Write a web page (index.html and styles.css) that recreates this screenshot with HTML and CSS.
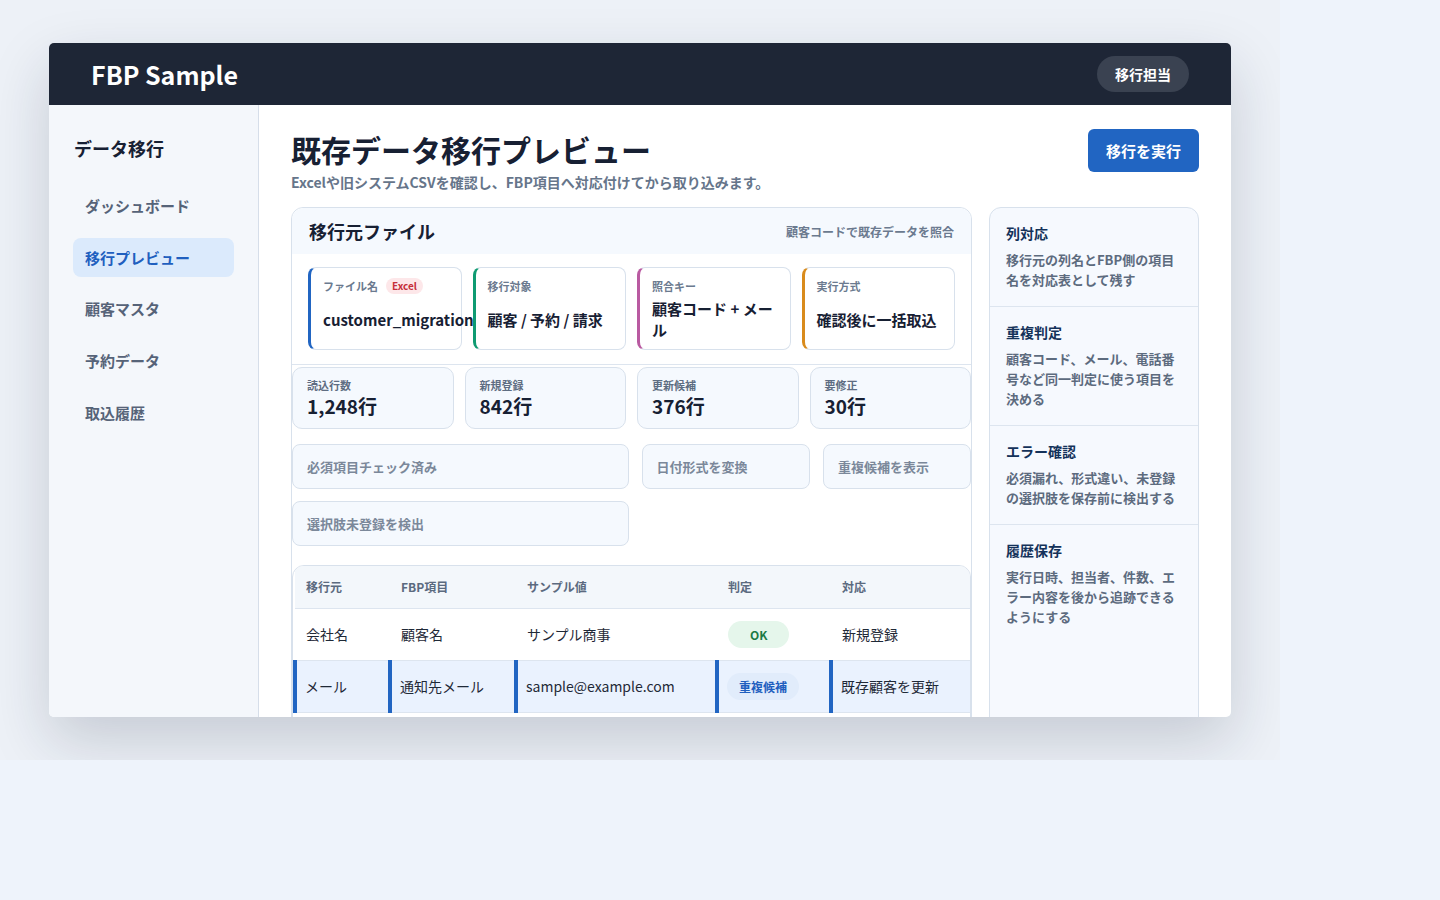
FILE: index.html
```html
<!DOCTYPE html>
<html lang="ja">
<head>
    <meta charset="UTF-8">
    <meta name="viewport" content="width=device-width, initial-scale=1.0">
    <title>FBP Sample - 既存データ移行プレビュー</title>
    <link rel="stylesheet" href="styles.css">
</head>
<body>

<div class="stage">
<div class="app">

    <header class="topbar">
        <div class="brand">FBP Sample</div>
        <div class="role">移行担当</div>
    </header>

    <div class="layout">
        <!-- Sidebar -->
        <nav class="sidebar">
            <h2>データ移行</h2>
            <ul class="nav">
                <li>ダッシュボード</li>
                <li class="active">移行プレビュー</li>
                <li>顧客マスタ</li>
                <li>予約データ</li>
                <li>取込履歴</li>
            </ul>
        </nav>

        <main class="main">
            <div class="page-head">
                <div>
                    <h1>既存データ移行プレビュー</h1>
                    <p class="lead">Excelや旧システムCSVを確認し、FBP項目へ対応付けてから取り込みます。</p>
                </div>
                <button class="run-btn">移行を実行</button>
            </div>

            <div class="content">
                <!-- Source file panel -->
                <section class="panel">
                    <div class="panel-top">
                        <div class="panel-head">
                            <h3>移行元ファイル</h3>
                            <span class="panel-note">顧客コードで既存データを照合</span>
                        </div>
                        <div class="file-cards">
                            <div class="file-card blue">
                                <div class="fc-label">ファイル名 <span class="tag-excel">Excel</span></div>
                                <div class="fc-value">customer_migration_2024.xlsx</div>
                            </div>
                            <div class="file-card green">
                                <div class="fc-label">移行対象</div>
                                <div class="fc-value">顧客 / 予約 / 請求</div>
                            </div>
                            <div class="file-card pink">
                                <div class="fc-label">照合キー</div>
                                <div class="fc-value wrap">顧客コード + メール</div>
                            </div>
                            <div class="file-card orange">
                                <div class="fc-label">実行方式</div>
                                <div class="fc-value">確認後に一括取込</div>
                            </div>
                        </div>
                    </div>

                    <div class="stats">
                        <div class="stat">
                            <div class="stat-label">読込行数</div>
                            <div class="stat-value">1,248行</div>
                        </div>
                        <div class="stat">
                            <div class="stat-label">新規登録</div>
                            <div class="stat-value">842行</div>
                        </div>
                        <div class="stat">
                            <div class="stat-label">更新候補</div>
                            <div class="stat-value">376行</div>
                        </div>
                        <div class="stat">
                            <div class="stat-label">要修正</div>
                            <div class="stat-value">30行</div>
                        </div>
                    </div>

                    <div class="checks">
                        <div class="check">必須項目チェック済み</div>
                        <div class="check">日付形式を変換</div>
                        <div class="check">重複候補を表示</div>
                        <div class="check">選択肢未登録を検出</div>
                    </div>

                    <div class="table-wrap">
                        <table class="map-table">
                            <colgroup>
                                <col style="width: 95px">
                                <col style="width: 126px">
                                <col style="width: 201px">
                                <col style="width: 114px">
                                <col>
                            </colgroup>
                            <thead>
                                <tr>
                                    <th>移行元</th>
                                    <th>FBP項目</th>
                                    <th>サンプル値</th>
                                    <th>判定</th>
                                    <th>対応</th>
                                </tr>
                            </thead>
                            <tbody>
                                <tr>
                                    <td>会社名</td>
                                    <td>顧客名</td>
                                    <td>サンプル商事</td>
                                    <td><span class="badge ok">OK</span></td>
                                    <td>新規登録</td>
                                </tr>
                                <tr class="dup">
                                    <td>メール</td>
                                    <td>通知先メール</td>
                                    <td>sample@example.com</td>
                                    <td><span class="badge warn">重複候補</span></td>
                                    <td>既存顧客を更新</td>
                                </tr>
                                <tr>
                                    <td>電話</td>
                                    <td>電話番号</td>
                                    <td>03-1234-5678</td>
                                    <td><span class="badge ok">OK</span></td>
                                    <td>形式を変換</td>
                                </tr>
                            </tbody>
                        </table>
                    </div>
                </section>

                <!-- Rules -->
                <aside class="rules">
                    <div class="rule">
                        <h4>列対応</h4>
                        <p>移行元の列名とFBP側の項目名を対応表として残す</p>
                    </div>
                    <div class="rule">
                        <h4>重複判定</h4>
                        <p>顧客コード、メール、電話番号など同一判定に使う項目を決める</p>
                    </div>
                    <div class="rule">
                        <h4>エラー確認</h4>
                        <p>必須漏れ、形式違い、未登録の選択肢を保存前に検出する</p>
                    </div>
                    <div class="rule">
                        <h4>履歴保存</h4>
                        <p>実行日時、担当者、件数、エラー内容を後から追跡できるようにする</p>
                    </div>
                </aside>
            </div>
        </main>
    </div>

</div>
</div>

</body>
</html>
```

FILE: styles.css
```css
* {
    box-sizing: border-box;
}
body {
    margin: 0;
    padding: 0;
    background-color: #eef3fb;
    font-family: "Noto Sans CJK JP", "Noto Sans", sans-serif;
    color: #172033;
}
h1, h2, h3, h4, p, ul {
    margin: 0;
    padding: 0;
}
.stage {
    width: 1280px;
    height: 760px;
    overflow: hidden;
    padding: 43px 49px;
    background-color: #edf1f7;
}
.app {
    width: 1182px;
    height: 674px;
    background-color: #fff;
    border-radius: 5px;
    overflow: hidden;
    display: flex;
    flex-direction: column;
    box-shadow: 0 24px 60px rgba(20, 32, 56, 0.18);
}

/* top bar */
.topbar {
    height: 62px;
    flex-shrink: 0;
    background-color: #1e2636;
    display: flex;
    align-items: center;
    justify-content: space-between;
    padding: 0 42px;
}
.brand {
    color: #fff;
    font-size: 25px;
    font-weight: 700;
}
.role {
    height: 36px;
    padding: 0 18px;
    border-radius: 18px;
    background-color: #3a4251;
    color: #fff;
    font-size: 14px;
    font-weight: 700;
    display: flex;
    align-items: center;
}

.layout {
    flex: 1;
    display: flex;
    min-height: 0;
}

/* sidebar */
.sidebar {
    width: 210px;
    flex-shrink: 0;
    background-color: #f4f7fb;
    border-right: 1px solid #d6dee9;
    padding: 30px 24px 0 24px;
}
.sidebar h2 {
    font-size: 18px;
    font-weight: 700;
    line-height: 26px;
    padding-left: 1px;
    color: #172033;
}
.nav {
    list-style: none;
    margin-top: 25px;
    display: flex;
    flex-direction: column;
    gap: 12.7px;
}
.nav li {
    height: 39px;
    line-height: 39px;
    padding-left: 12px;
    border-radius: 8px;
    font-size: 15px;
    font-weight: 700;
    color: #566378;
}
.nav li.active {
    background-color: #dbeafc;
    color: #1f5fbf;
}

/* main */
.main {
    flex: 1;
    min-width: 0;
    padding: 24px 32px 0 32px;
    overflow: hidden;
}
.page-head {
    display: flex;
    justify-content: space-between;
    align-items: flex-start;
}
.page-head h1 {
    font-size: 30px;
    line-height: 40px;
    font-weight: 700;
    color: #172033;
}
.lead {
    margin-top: 3px;
    font-size: 14px;
    line-height: 20px;
    font-weight: 700;
    color: #66758a;
}
.run-btn {
    height: 43px;
    padding: 0 18px;
    border: none;
    border-radius: 6px;
    background-color: #2165c2;
    color: #fff;
    font-family: inherit;
    font-size: 15px;
    font-weight: 700;
    cursor: pointer;
}

.content {
    margin-top: 15px;
    display: flex;
    gap: 17px;
    align-items: flex-start;
}

/* source panel */
.panel {
    width: 681px;
    flex-shrink: 0;
    border: 1px solid #d8e1ec;
    border-radius: 12px;
    background-color: #fff;
    padding-bottom: 20px;
}
.panel-top {
    border-bottom: 1px solid #dde5ef;
    padding-bottom: 14px;
    border-radius: 12px 12px 0 0;
}
.panel-head {
    height: 46px;
    padding: 0 17px;
    background-color: #f5f9fe;
    border-radius: 12px 12px 0 0;
    display: flex;
    align-items: center;
    justify-content: space-between;
}
.panel-head h3 {
    font-size: 18px;
    font-weight: 700;
    color: #172033;
}
.panel-note {
    font-size: 12px;
    font-weight: 700;
    color: #6b7a8f;
}
.file-cards {
    display: grid;
    grid-template-columns: repeat(4, 1fr);
    gap: 11px;
    padding: 13px 16px 0 16px;
}
.file-card {
    background-color: #fff;
    border: 1px solid #d8e1ec;
    border-left: 3px solid #2165c2;
    border-radius: 8px;
    padding: 10px 12px 9px 12px;
    display: flex;
    flex-direction: column;
    gap: 4px;
    min-width: 0;
}
.file-card.green { border-left-color: #0f9b72; }
.file-card.pink { border-left-color: #b95aa1; }
.file-card.orange { border-left-color: #d98b1c; }
.fc-label {
    font-size: 11px;
    line-height: 16px;
    font-weight: 700;
    color: #6b7a8f;
    display: flex;
    align-items: center;
}
.tag-excel {
    margin-left: 8px;
    padding: 0 6px;
    border-radius: 10px;
    background-color: #fde7e9;
    color: #c62f3a;
    font-size: 10px;
    line-height: 16px;
}
.fc-value {
    flex: 1;
    display: flex;
    align-items: center;
    font-size: 15px;
    line-height: 21px;
    font-weight: 700;
    color: #172033;
    white-space: nowrap;
}
.fc-value.wrap {
    white-space: normal;
}

/* stats */
.stats {
    display: grid;
    grid-template-columns: repeat(4, 1fr);
    gap: 11px;
    margin-top: 2px;
}
.stat {
    height: 62px;
    background-color: #f5f9fe;
    border: 1px solid #d8e1ec;
    border-radius: 10px;
    padding: 9px 14px;
}
.stat-label {
    font-size: 11px;
    line-height: 16px;
    font-weight: 700;
    color: #5e6d82;
}
.stat-value {
    font-size: 19px;
    line-height: 25px;
    font-weight: 700;
    color: #172033;
}

/* checks */
.checks {
    margin-top: 15px;
    display: grid;
    grid-template-columns: 2fr 1fr 0.88fr;
    gap: 12px 13px;
}
.check {
    height: 45px;
    display: flex;
    align-items: center;
    padding: 0 14px;
    background-color: #f5f9fe;
    border: 1px solid #d8e1ec;
    border-radius: 8px;
    font-size: 13px;
    font-weight: 700;
    color: #7b889a;
}

/* table */
.table-wrap {
    margin-top: 19px;
    border: 1px solid #d8e1ec;
    border-radius: 12px;
    overflow: hidden;
}
.map-table {
    width: 100%;
    border-collapse: collapse;
    table-layout: fixed;
}
.map-table th {
    height: 42px;
    padding: 0 11px;
    text-align: left;
    background-color: #f3f7fb;
    border-bottom: 1px solid #dde5ef;
    font-size: 12px;
    font-weight: 700;
    color: #5b6a7f;
}
.map-table td {
    height: 52px;
    padding: 0 11px;
    border-bottom: 1px solid #dde5ef;
    font-size: 14px;
    color: #1f2937;
    white-space: nowrap;
}
.map-table tr.dup td {
    background-color: #eaf2fe;
    border-left: 4px solid #2165c2;
    padding-left: 8px;
}
.badge {
    display: inline-block;
    height: 27px;
    line-height: 27px;
    border-radius: 14px;
    font-size: 12px;
    font-weight: 700;
}
.badge.ok {
    padding: 0 22px;
    background-color: #e5f6eb;
    color: #1c7a45;
}
.badge.warn {
    padding: 0 12px;
    background-color: #e1ecfb;
    color: #1f5fbf;
}

/* rules */
.rules {
    flex: 1;
    height: 560px;
    background-color: #f6f9fe;
    border: 1px solid #d8e1ec;
    border-radius: 12px;
}
.rule {
    padding: 15px 16px 16px 16px;
    border-bottom: 1px solid #dde5ef;
}
.rule:last-child {
    border-bottom: none;
}
.rule h4 {
    font-size: 14px;
    line-height: 20px;
    font-weight: 700;
    color: #14325a;
}
.rule p {
    margin-top: 7px;
    font-size: 13px;
    line-height: 20px;
    font-weight: 700;
    color: #5d6b7e;
}
```
